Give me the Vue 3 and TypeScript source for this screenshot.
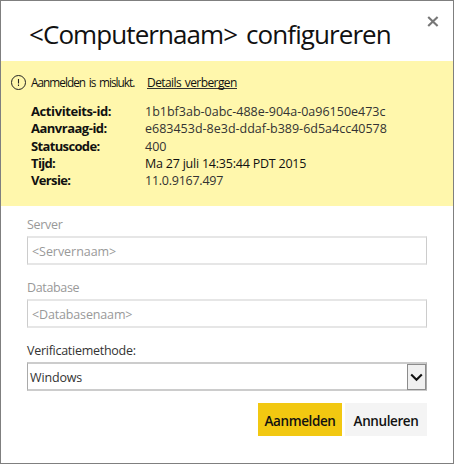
<script setup lang="ts">
import { ref } from 'vue'

interface Detail {
  key: string
  label: string
  value: string
}

const details: Detail[] = [
  { key: 'activity', label: 'Activiteits-id:', value: '1b1bf3ab-0abc-488e-904a-0a96150e473c' },
  { key: 'request', label: 'Aanvraag-id:', value: 'e683453d-8e3d-ddaf-b389-6d5a4cc40578' },
  { key: 'status', label: 'Statuscode:', value: '400' },
  { key: 'time', label: 'Tijd:', value: 'Ma 27 juli 14:35:44 PDT 2015' },
  { key: 'version', label: 'Versie:', value: '11.0.9167.497' },
]
const showDetails = ref(true)
</script>

<template>
  <main class="dialog">
    <header class="header">
      <h1 class="title">&lt;Computernaam&gt; configureren</h1>
      <button class="close" type="button">
        <svg width="12" height="12" viewBox="0 0 12 12">
          <path d="M1.2 1.9L10.6 11.1M10.6 1.9L1.2 11.1" fill="none" stroke="#777" stroke-width="2.1" />
        </svg>
      </button>
    </header>

    <section class="alert">
      <div class="alert-line">
        <svg class="alert-icon" width="16" height="16" viewBox="0 0 16 16">
          <circle cx="7.5" cy="8.5" r="7" fill="none" stroke="#222" stroke-width="1" />
          <path d="M7.5 5V9.6M7.5 10.6V12" stroke="#222" stroke-width="1.1" />
        </svg>
        <span class="alert-text">Aanmelden is mislukt.</span>
        <a class="toggle" @click="showDetails = !showDetails">Details verbergen</a>
      </div>
      <dl v-if="showDetails" class="details">
        <div v-for="d in details" :key="d.key" class="detail" :class="d.key">
          <dt>{{ d.label }}</dt>
          <dd>{{ d.value }}</dd>
        </div>
      </dl>
    </section>

    <form class="form" @submit.prevent>
      <label class="label server">Server</label>
      <div class="field server-name">&lt;Servernaam&gt;</div>
      <label class="label database">Database</label>
      <div class="field database-name">&lt;Databasenaam&gt;</div>
      <label class="label method">Verificatiemethode:</label>
      <div class="select">
        <span class="selected">Windows</span>
        <span class="arrow">
          <svg width="13" height="9" viewBox="0 0 13 9">
            <path d="M1.2 1.5L6.5 6.7L11.8 1.5" fill="none" stroke="#111" stroke-width="2.1" />
          </svg>
        </span>
      </div>
      <div class="actions">
        <button class="btn primary" type="submit">Aanmelden</button>
        <button class="btn secondary" type="button">Annuleren</button>
      </div>
    </form>
  </main>
</template>

<style>
body {
  margin: 0;
  background: #fff;
}
</style>

<style scoped>
* {
  box-sizing: border-box;
}
.dialog {
  width: 454px;
  height: 464px;
  border: 1px solid #7f7f7f;
  background: #fff;
  color: #111;
  font-family: "Open Sans", "Noto Sans", sans-serif;
  font-size: 12.5px;
  line-height: 17px;
  white-space: nowrap;
  overflow: hidden;
}
.header {
  display: flex;
  justify-content: space-between;
  height: 60px;
  padding: 14px 14px 0 28px;
}
.title {
  margin: -1px 0 0;
  font-size: 26px;
  font-weight: 400;
  line-height: 40px;
  letter-spacing: -0.92px;
  word-spacing: 3px;
}
.close {
  display: flex;
  width: 12px;
  height: 12px;
  padding: 0;
  border: 0;
  background: none;
}
.alert {
  height: 145px;
  padding: 13px 0 0 10px;
  background: #fff7ac;
}
.alert-line {
  display: flex;
  height: 17px;
  font-size: 12px;
}
.alert-icon {
  flex: none;
}
.alert-text {
  width: 116px;
  margin-left: 4px;
  font-size: 11.8px;
  letter-spacing: -0.97px;
  word-spacing: 1.5px;
}
.toggle {
  height: 15px;
  border-bottom: 1px solid #333;
  letter-spacing: -0.57px;
  word-spacing: 1px;
}
.details {
  margin: 12px 0 0 20px;
}
.detail {
  display: flex;
  height: 17.25px;
}
dt {
  width: 114px;
  font-size: 13px;
  font-weight: 700;
  letter-spacing: -0.4px;
}
.request dt {
  letter-spacing: -0.5px;
}
.status dt,
.time dt,
.version dt {
  letter-spacing: -0.65px;
}
dd {
  margin: 0;
  color: #333;
}
.time dd {
  color: #111;
  letter-spacing: -0.22px;
}
.version dd {
  letter-spacing: -0.25px;
}
.form {
  display: flex;
  flex-direction: column;
  padding: 10px 26px 0;
}
.label {
  height: 20px;
}
.server,
.database,
.server-name,
.database-name {
  color: #999;
}
.server {
  letter-spacing: -0.3px;
}
.database {
  letter-spacing: -0.35px;
}
.field {
  height: 29px;
  margin-bottom: 14px;
  padding: 5px 0 0 4px;
  border: solid #e6e6e6;
  border-width: 2px 1px;
  border-left-color: #ccc;
  border-right-color: #ccc;
}
.server-name {
  letter-spacing: -0.05px;
}
.database-name {
  letter-spacing: -0.15px;
}
.method {
  color: #333;
  letter-spacing: -0.27px;
}
.select {
  display: flex;
  justify-content: space-between;
  height: 29px;
  border: solid #ccc;
  border-width: 2px 1px;
  border-left-color: #aaa;
  border-right-color: #aaa;
}
.selected {
  padding: 5px 0 0 2px;
  color: #333;
  letter-spacing: -0.15px;
}
.arrow {
  display: flex;
  align-items: center;
  justify-content: center;
  width: 19px;
  height: 26px;
  border: 1px solid #8c8c8c;
  background: #f0f0f0;
}
.actions {
  display: flex;
  justify-content: flex-end;
  gap: 3px;
  margin-top: 12px;
}
.btn {
  height: 33px;
  padding: 3px 0 0;
  border: 0;
  color: #111;
  font: 600 13.5px/30px "Open Sans", "Noto Sans", sans-serif;
  letter-spacing: -0.4px;
}
.primary {
  width: 84px;
  background: #f2c811;
}
.secondary {
  width: 82px;
  background: #f4f4f4;
}
</style>
